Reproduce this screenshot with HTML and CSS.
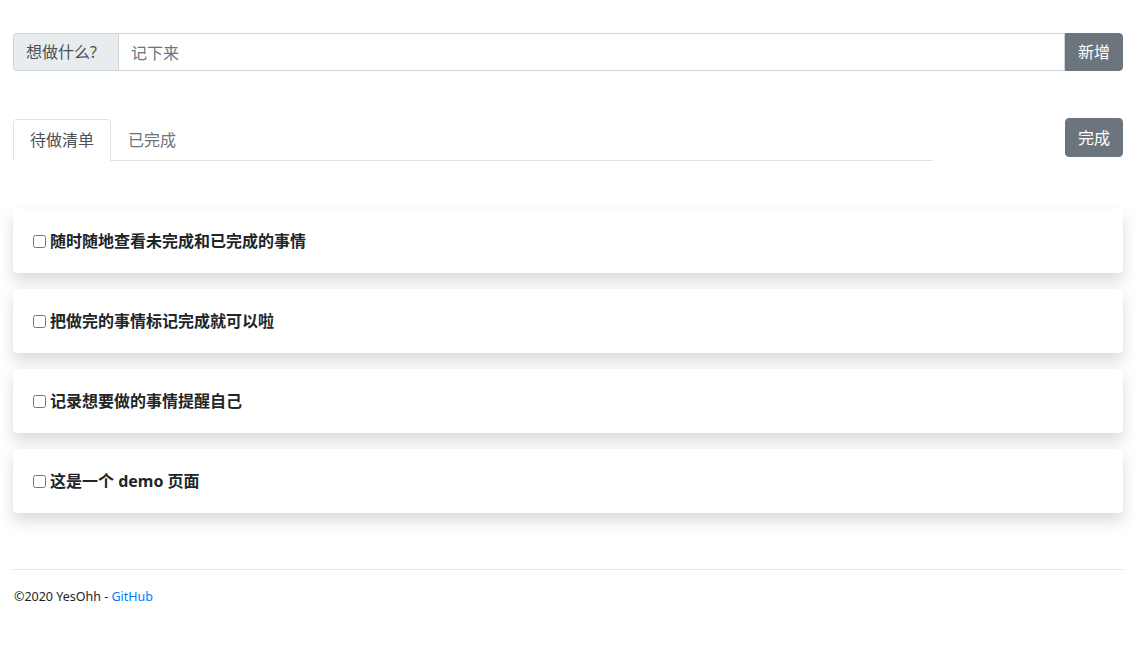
FILE: index.html
```html
<!DOCTYPE html>
<html lang="zh">
<head>
<meta charset="utf-8">
<title>Todo</title>
<link rel="stylesheet" href="styles.css">
</head>
<body>
<div class="page">
  <div class="input-group">
    <span class="addon">想做什么?</span>
    <input class="field" type="text" placeholder="记下来">
    <button class="btn btn-add">新增</button>
  </div>

  <div class="tabs-row">
    <ul class="tabs">
      <li class="tab active">待做清单</li>
      <li class="tab">已完成</li>
    </ul>
    <div class="tabs-side">
      <button class="btn btn-done">完成</button>
    </div>
  </div>

  <div class="list">
    <div class="card"><label><input type="checkbox"> 随时随地查看未完成和已完成的事情</label></div>
    <div class="card"><label><input type="checkbox"> 把做完的事情标记完成就可以啦</label></div>
    <div class="card"><label><input type="checkbox"> 记录想要做的事情提醒自己</label></div>
    <div class="card"><label><input type="checkbox"> 这是一个 demo 页面</label></div>
  </div>

  <footer class="footer">
    <span>©2020 YesOhh - <a href="#">GitHub</a></span>
  </footer>
</div>
</body>
</html>
```

FILE: styles.css
```css
* { box-sizing: border-box; }
html, body { margin: 0; padding: 0; background: #fff; }
body {
  font-family: "Noto Sans", "Noto Sans CJK SC", sans-serif;
  font-size: 16px;
  line-height: 1.5;
  color: #212529;
}
.page {
  width: 1110px;
  margin-left: 13px;
  padding-top: 33px;
}
.input-group {
  display: flex;
  height: 38px;
}
.addon {
  display: flex;
  align-items: center;
  padding: 0 12px;
  background: #e9ecef;
  border: 1px solid #ced4da;
  border-right: none;
  border-radius: 4px 0 0 4px;
  color: #495057;
  font-size: 16px;
  width: 105px;
  white-space: nowrap;
}
.field {
  flex: 1;
  min-width: 0;
  border: 1px solid #ced4da;
  padding: 2px 12px 0;
  font-family: inherit;
  font-size: 16px;
  color: #495057;
  outline: none;
}
.field::placeholder { color: #6c757d; }
.btn {
  background: #6c757d;
  color: #fff;
  border: 1px solid #6c757d;
  border-radius: 4px;
  font-family: inherit;
  font-size: 16px;
  line-height: 24px;
  padding: 6px 12px;
  height: 38px;
  width: 58px;
  cursor: pointer;
}
.btn-add { border-radius: 0 4px 4px 0; }
.btn-done { height: 39px; }
.tabs-row {
  display: flex;
  justify-content: space-between;
  margin-top: 47px;
}
.tabs {
  list-style: none;
  margin: 0;
  padding: 0;
  display: flex;
  width: 920px;
  border-bottom: 1px solid #dee2e6;
  margin-top: 1px;
  height: 42px;
}
.tab {
  padding: 8px 16px;
  margin-bottom: -1px;
  border: 1px solid transparent;
  border-radius: 4px 4px 0 0;
  color: #6c757d;
  line-height: 24px;
}
.tab.active {
  color: #495057;
  background: #fff;
  border-color: #dee2e6 #dee2e6 #fff;
}
.tabs-side { display: flex; align-items: flex-start; }
.list {
  margin-top: 48px;
  display: flex;
  flex-direction: column;
  gap: 16px;
}
.card {
  background: #fff;
  box-shadow: 0 8px 16px rgba(0,0,0,.15);
  padding: 20px 20px;
  height: 64px;
  font-weight: 700;
  border-radius: 4px;
}
.card label { display: flex; align-items: center; }
.card input {
  margin: 0 4px 0 0;
  width: 13px;
  height: 13px;
}
.footer {
  margin-top: 56px;
  border-top: 1px solid #e5e5e5;
  padding-top: 18px;
  padding-left: 1px;
  font-size: 12.5px;
  color: #212529;
}
.footer a { color: #007bff; text-decoration: none; }
```
